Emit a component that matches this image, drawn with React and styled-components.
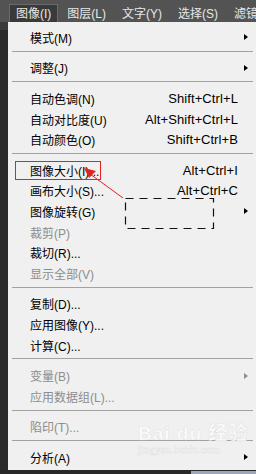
import React from 'react';
import styled, { createGlobalStyle } from 'styled-components';

const GlobalStyle = createGlobalStyle`
  html, body {
    margin: 0;
    padding: 0;
    background: #282828;
  }
`;

const Page = styled.div`
  position: relative;
  width: 256px;
  height: 474px;
  overflow: hidden;
  display: flex;
  flex-direction: column;
  background: #282828;
  font-family: "Liberation Sans", "Noto Sans CJK SC", sans-serif;
`;

const MenuBar = styled.div`
  height: 22px;
  flex: none;
  display: flex;
  align-items: flex-end;
  padding-left: 9px;
  background: #535353;
`;

const MenuTitle = styled.div`
  box-sizing: border-box;
  height: 18px;
  padding: 0 6px 2px;
  margin-right: 2px;
  display: flex;
  align-items: center;
  font-size: 12px;
  color: #e8e8e8;
  white-space: nowrap;
  flex: none;
  background: ${(p) => (p.$active ? '#3a3a3a' : 'transparent')};
  border: 1px solid ${(p) => (p.$active ? '#6a6a6a' : 'transparent')};
  border-bottom: none;
`;

const Body = styled.div`
  flex: none;
  display: flex;
  height: 448px;
`;

const Gutter = styled.div`
  width: 8px;
  flex: none;
  background: linear-gradient(#3a3a3a 0 8px, #2a2a2a 8px);
`;

const Menu = styled.div`
  flex: 1;
  box-sizing: border-box;
  padding-top: 5px;
  background: #f0f0f0;
`;

const Row = styled.div`
  height: 20.6px;
  display: grid;
  grid-template-columns: 1fr auto 18px;
  align-items: center;
  padding-left: 22px;
  font-size: 12px;
  color: ${(p) => (p.$disabled ? '#8d8d8d' : '#000')};
  white-space: nowrap;
`;

const Shortcut = styled.span`
  font-size: 13px;
  letter-spacing: 0.1px;
`;

const Arrow = styled.span`
  justify-self: start;
  margin-left: 6px;
  width: 0;
  height: 0;
  border-top: 3.5px solid transparent;
  border-bottom: 3.5px solid transparent;
  border-left: 4px solid ${(p) => (p.$disabled ? '#8d8d8d' : '#000')};
`;

const Separator = styled.div`
  height: 10px;
  box-sizing: border-box;
  padding-top: 3px;
  margin: 0 3px 0 4px;

  &::before {
    content: '';
    display: block;
    height: 1px;
    background: #a2a2a2;
  }
`;

const Footer = styled.div`
  flex: 1;
  display: flex;
  align-items: flex-end;
  justify-content: flex-end;
`;

const FooterPanel = styled.div`
  width: 65px;
  height: 3px;
  background: #9aa8ba;
`;

const Highlight = styled.div`
  position: absolute;
  left: 15px;
  top: 161px;
  width: 86px;
  height: 19px;
  box-sizing: border-box;
  border: 1px solid #e8211e;
`;

const Annotation = styled.svg`
  position: absolute;
  left: 0;
  top: 0;
  pointer-events: none;
`;

const Watermark = styled.div`
  position: absolute;
  left: 138px;
  top: 418px;
  display: flex;
  flex-direction: column;
  align-items: flex-start;
  color: rgba(255, 255, 255, 0.85);
  -webkit-text-stroke: 0.5px rgba(205, 205, 205, 0.5);
  pointer-events: none;
`;

const WatermarkLogo = styled.div`
  font-family: "Liberation Sans", "Noto Sans CJK SC", sans-serif;
  font-weight: bold;
  font-size: 19px;
  letter-spacing: 1px;
`;

const WatermarkUrl = styled.div`
  font-family: "Liberation Serif", serif;
  font-size: 11px;
  margin-top: -2px;
`;

const items = [
  { label: '模式(M)', sub: true },
  'sep',
  { label: '调整(J)', sub: true },
  'sep',
  { label: '自动色调(N)', key: 'Shift+Ctrl+L' },
  { label: '自动对比度(U)', key: 'Alt+Shift+Ctrl+L' },
  { label: '自动颜色(O)', key: 'Shift+Ctrl+B' },
  'sep',
  { label: '图像大小(I)...', key: 'Alt+Ctrl+I' },
  { label: '画布大小(S)...', key: 'Alt+Ctrl+C' },
  { label: '图像旋转(G)', sub: true },
  { label: '裁剪(P)', disabled: true },
  { label: '裁切(R)...' },
  { label: '显示全部(V)', disabled: true },
  'sep',
  { label: '复制(D)...' },
  { label: '应用图像(Y)...' },
  { label: '计算(C)...' },
  'sep',
  { label: '变量(B)', sub: true, disabled: true },
  { label: '应用数据组(L)...', disabled: true },
  'sep',
  { label: '陷印(T)...', disabled: true },
  'sep',
  { label: '分析(A)', sub: true },
];

const titles = ['图像(I)', '图层(L)', '文字(Y)', '选择(S)', '滤镜'];

export default function App() {
  return (
    <Page>
      <GlobalStyle />
      <MenuBar>
        {titles.map((t, i) => (
          <MenuTitle key={t} $active={i === 0}>{t}</MenuTitle>
        ))}
      </MenuBar>
      <Body>
        <Gutter />
        <Menu>
          {items.map((it, i) =>
            it === 'sep' ? (
              <Separator key={i} />
            ) : (
              <Row key={i} $disabled={it.disabled}>
                <span>{it.label}</span>
                <Shortcut>{it.key || ''}</Shortcut>
                {it.sub ? <Arrow $disabled={it.disabled} /> : <span />}
              </Row>
            )
          )}
        </Menu>
      </Body>
      <Footer>
        <FooterPanel />
      </Footer>

      <Highlight />
      <Annotation width="256" height="474" viewBox="0 0 256 474">
        <line x1="123" y1="198" x2="90" y2="174" stroke="#e8211e" strokeWidth="1" />
        <polygon points="84,168 96,171 89,178" fill="#e8211e" />
        <rect x="125.5" y="198.5" width="88" height="30" fill="none" stroke="#111" strokeWidth="1.2" strokeDasharray="8 6" />
      </Annotation>
      <Watermark>
        <WatermarkLogo>Bai du 经验</WatermarkLogo>
        <WatermarkUrl>jingyan.baidu.com</WatermarkUrl>
      </Watermark>
    </Page>
  );
}
